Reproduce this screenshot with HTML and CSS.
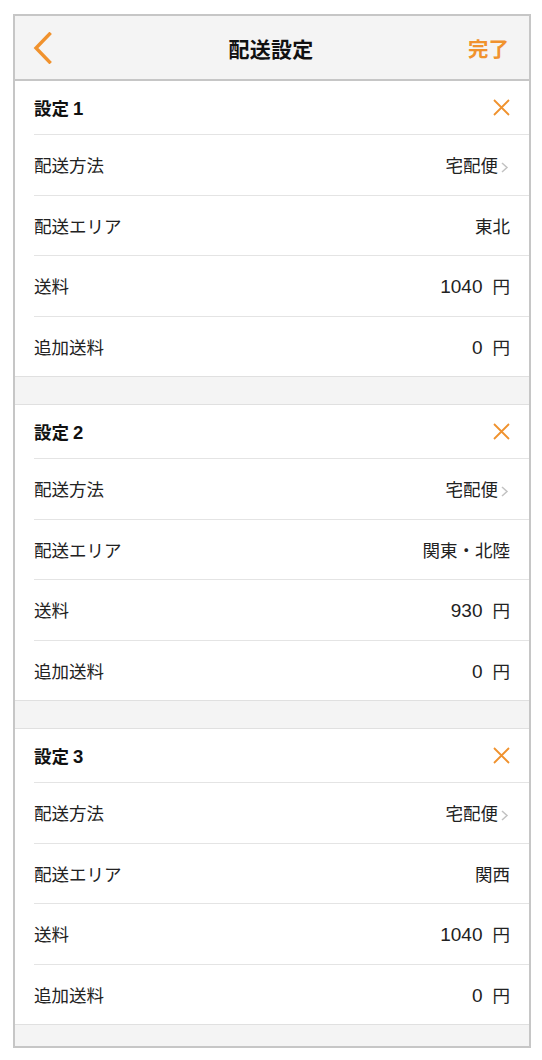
FILE: index.html
```html
<!DOCTYPE html>
<html lang="ja">
<head>
<meta charset="utf-8">
<link rel="stylesheet" href="styles.css">
</head>
<body>
<div class="frame">
  <header class="nav">
    <div class="nav-left">
      <svg class="back" width="20" height="32" viewBox="0 0 20 32"><path d="M16.5 2 L3 16 L16.5 30" fill="none" stroke="#f0922e" stroke-width="3.4" stroke-linecap="square" stroke-linejoin="miter"/></svg>
    </div>
    <div class="nav-title">配送設定</div>
    <div class="nav-right"><span class="done">完了</span></div>
  </header>

  <section class="group">
    <div class="group-head">
      <span class="group-title">設定 <span class="num">1</span></span>
      <svg class="close" width="17" height="17" viewBox="0 0 17 17"><path d="M1 1 L16 16 M16 1 L1 16" stroke="#f0922e" stroke-width="1.8" fill="none"/></svg>
    </div>
    <div class="row"><span class="label">配送方法</span><span class="value">宅配便<svg class="chev" width="9" height="11" viewBox="0 0 9 11"><path d="M2 1 L7 5.5 L2 10" fill="none" stroke="#c2c2c2" stroke-width="1.5"/></svg></span></div>
    <div class="row"><span class="label">配送エリア</span><span class="value">東北</span></div>
    <div class="row"><span class="label">送料</span><span class="value"><span class="num">1040</span>円</span></div>
    <div class="row"><span class="label">追加送料</span><span class="value"><span class="num">0</span>円</span></div>
  </section>
  <div class="spacer"></div>

  <section class="group">
    <div class="group-head">
      <span class="group-title">設定 <span class="num">2</span></span>
      <svg class="close" width="17" height="17" viewBox="0 0 17 17"><path d="M1 1 L16 16 M16 1 L1 16" stroke="#f0922e" stroke-width="1.8" fill="none"/></svg>
    </div>
    <div class="row"><span class="label">配送方法</span><span class="value">宅配便<svg class="chev" width="9" height="11" viewBox="0 0 9 11"><path d="M2 1 L7 5.5 L2 10" fill="none" stroke="#c2c2c2" stroke-width="1.5"/></svg></span></div>
    <div class="row"><span class="label">配送エリア</span><span class="value">関東・北陸</span></div>
    <div class="row"><span class="label">送料</span><span class="value"><span class="num">930</span>円</span></div>
    <div class="row"><span class="label">追加送料</span><span class="value"><span class="num">0</span>円</span></div>
  </section>
  <div class="spacer"></div>

  <section class="group">
    <div class="group-head">
      <span class="group-title">設定 <span class="num">3</span></span>
      <svg class="close" width="17" height="17" viewBox="0 0 17 17"><path d="M1 1 L16 16 M16 1 L1 16" stroke="#f0922e" stroke-width="1.8" fill="none"/></svg>
    </div>
    <div class="row"><span class="label">配送方法</span><span class="value">宅配便<svg class="chev" width="9" height="11" viewBox="0 0 9 11"><path d="M2 1 L7 5.5 L2 10" fill="none" stroke="#c2c2c2" stroke-width="1.5"/></svg></span></div>
    <div class="row"><span class="label">配送エリア</span><span class="value">関西</span></div>
    <div class="row"><span class="label">送料</span><span class="value"><span class="num">1040</span>円</span></div>
    <div class="row"><span class="label">追加送料</span><span class="value"><span class="num">0</span>円</span></div>
  </section>
  <div class="spacer"></div>
</div>
</body>
</html>
```

FILE: styles.css
```css
html, body {
  margin: 0;
  padding: 0;
  background: #ffffff;
}

body {
  font-family: "Noto Sans CJK JP", sans-serif;
  color: #1e1e1e;
}

.frame {
  margin: 14px 0 0 13px;
  width: 518px;
  height: 1034px;
  box-sizing: border-box;
  border: 2px solid #c6c6c6;
  overflow: hidden;
  background: #ffffff;
}

.nav {
  height: 65px;
  box-sizing: border-box;
  background: #f4f4f4;
  border-bottom: 2px solid #c6c6c6;
  display: grid;
  grid-template-columns: 1fr auto 1fr;
  align-items: center;
  padding: 0 20px 0 18px;
}

.nav-left {
  display: flex;
  align-items: center;
}

.back {
  display: block;
  margin-top: 1px;
}

.nav-title {
  font-size: 21px;
  font-weight: 700;
  color: #111111;
  letter-spacing: 0.2px;
}

.nav-right {
  display: flex;
  justify-content: flex-end;
}

.done {
  font-size: 20.5px;
  font-weight: 700;
  color: #f0922e;
}

.group-head {
  height: 53px;
  display: flex;
  align-items: center;
  justify-content: space-between;
  padding: 0 19px 0 19px;
}

.group-title {
  font-size: 17.5px;
  font-weight: 700;
  color: #111111;
}

.group-title .num {
  font-family: "Liberation Sans", sans-serif;
  font-size: 18.5px;
  font-weight: 700;
}

.close {
  display: block;
}

.row {
  height: 60.5px;
  box-sizing: border-box;
  margin-left: 19px;
  padding-right: 19px;
  border-top: 1px solid #e4e4e4;
  display: flex;
  align-items: center;
  justify-content: space-between;
  font-size: 17.5px;
}

.label {
  color: #222222;
}

.value {
  color: #222222;
  white-space: nowrap;
}

.value .num {
  font-family: "Liberation Sans", sans-serif;
  font-size: 19px;
  margin-right: 10px;
}

.chev {
  display: inline-block;
  vertical-align: -1px;
  margin-left: 2px;
  margin-right: 1px;
}

.spacer {
  height: 29px;
  box-sizing: border-box;
  background: #f4f4f4;
  border-top: 1px solid #e0e0e0;
  border-bottom: 1px solid #e0e0e0;
}
```
